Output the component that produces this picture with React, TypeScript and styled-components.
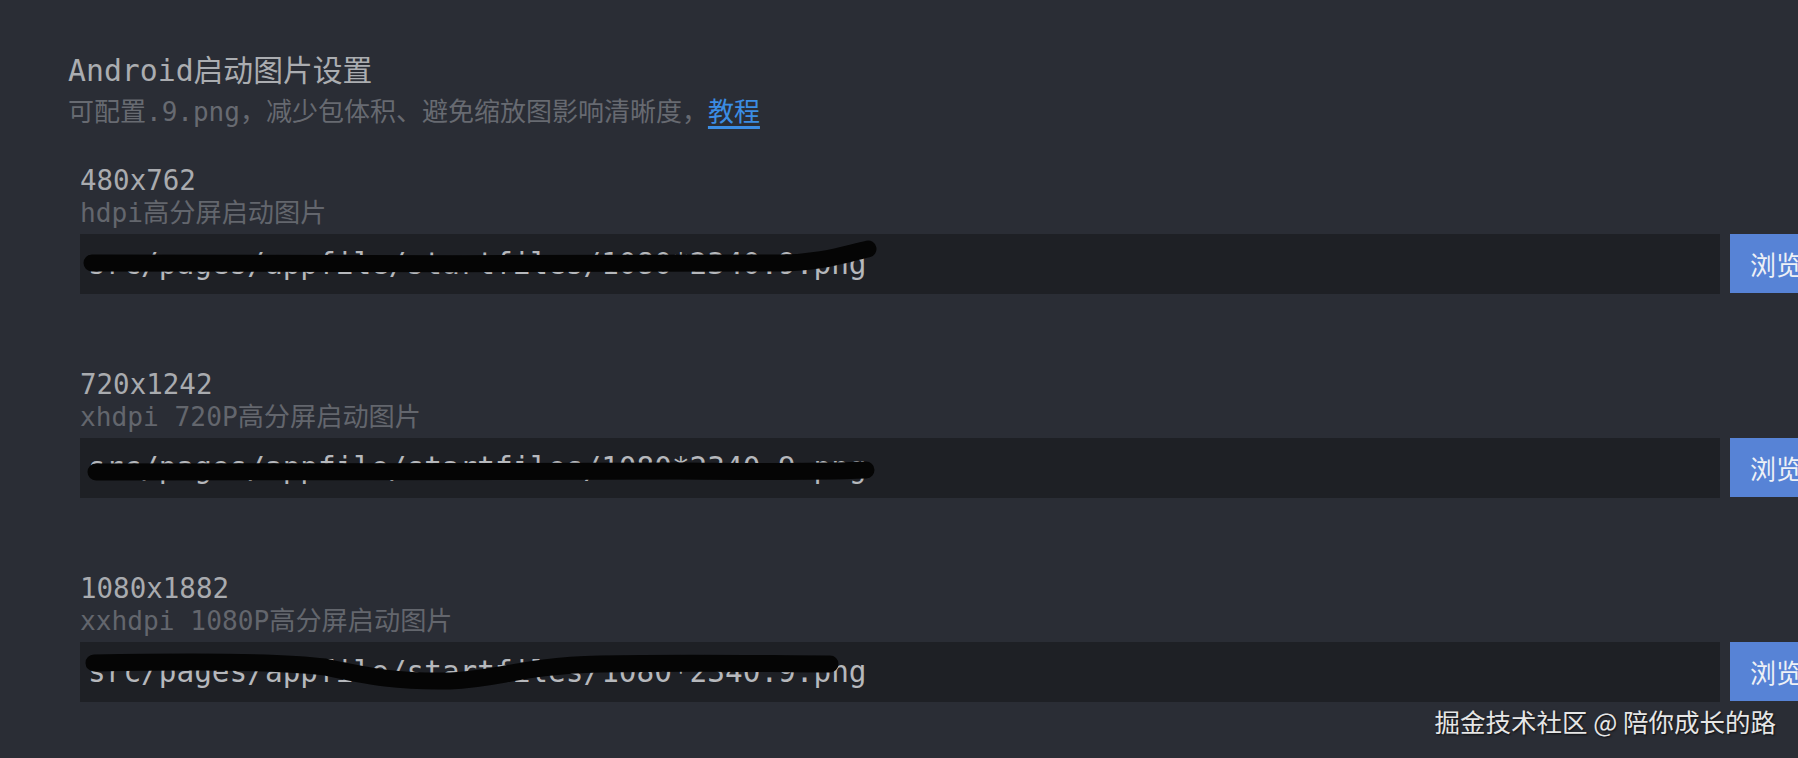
import styled, { createGlobalStyle } from 'styled-components';

const GlobalStyle = createGlobalStyle`
    html, body {
        margin: 0;
        padding: 0;
        background: #2a2d35;
        overflow: hidden;
    }
    #root {
        height: 758px;
    }
`

const mono = `"DejaVu Sans Mono", "Noto Sans CJK SC", monospace`;
const cjk = `"Noto Sans CJK SC", "Noto Sans", sans-serif`;

const Page = styled.div`
    position: relative;
    width: 1798px;
    height: 758px;
    box-sizing: border-box;
    padding-top: 52px;
    background: #2a2d35;
    font-family: ${mono};
`

const Header = styled.div`
    padding-left: 68px;
    display: flex;
    flex-direction: column;
`

const Title = styled.h1`
    margin: 0;
    font-size: 29.8px;
    font-weight: normal;
    line-height: 38px;
    color: #abadb1;
`

const Hint = styled.p`
    margin: 0;
    font-size: 26px;
    line-height: 40px;
    color: #676a71;
`

const Link = styled.a`
    font-family: ${cjk};
    color: #3b8de4;
    text-decoration: underline;
    text-decoration-thickness: 3px;
    text-underline-offset: 5px;
    cursor: pointer;
`

const List = styled.div`
    margin-top: 32px;
    padding-left: 80px;
    display: flex;
    flex-direction: column;
    gap: 74px;
`

const Item = styled.div`
    display: flex;
    flex-direction: column;
`

const Size = styled.div`
    font-size: 27.5px;
    line-height: 32px;
    color: #a9abaf;
`

const Desc = styled.div`
    font-size: 26.2px;
    line-height: 34px;
    color: #63666d;
`

const Field = styled.div`
    margin-top: 4px;
    display: flex;
    gap: 10px;
`

const PathBox = styled.div`
    position: relative;
    flex: 0 0 1640px;
    height: 60px;
    box-sizing: border-box;
    padding-left: 8px;
    display: flex;
    align-items: center;
    background: #1e2025;
    color: #b6b8bc;
    font-size: 29.4px;
    white-space: nowrap;
    overflow: hidden;
`

const Scribble = styled.svg`
    position: absolute;
    left: 0;
    top: 0;
    width: 1640px;
    height: 60px;
    pointer-events: none;
`

const Browse = styled.button`
    flex: 0 0 auto;
    height: 59px;
    padding: 0 20px;
    border: none;
    background: #5783d6;
    color: #eef1f6;
    font-family: ${cjk};
    font-size: 26px;
    white-space: nowrap;
`

const Watermark = styled.div`
    position: absolute;
    right: 22px;
    top: 704px;
    font-family: ${cjk};
    font-size: 25.5px;
    line-height: 34px;
    color: #e6e6e6;
    text-shadow: 1px 1px 2px rgba(0, 0, 0, 0.7);
    white-space: nowrap;
`

const items = [
    {
        size: '480x762',
        desc: 'hdpi高分屏启动图片',
        path: 'src/pages/appfile/startfiles/1080*2340.9.png',
        stroke: 'M12,29 C200,31 500,29 700,29 C740,29 765,20 788,15',
    },
    {
        size: '720x1242',
        desc: 'xhdpi 720P高分屏启动图片',
        path: 'src/pages/appfile/startfiles/1080*2340.9.png',
        stroke: 'M16,34 C200,35 450,32 600,33 C700,34 760,33 786,32',
    },
    {
        size: '1080x1882',
        desc: 'xxhdpi 1080P高分屏启动图片',
        path: 'src/pages/appfile/startfiles/1080*2340.9.png',
        stroke: 'M14,21 C120,19 200,19 245,25 C290,35 320,40 370,39 C420,37 440,24 520,22 C620,20 690,22 750,22',
    },
]

export default function App() {
    return (
        <Page>
            <GlobalStyle />
            <Header>
                <Title>Android启动图片设置</Title>
                <Hint>可配置.9.png，减少包体积、避免缩放图影响清晰度，<Link>教程</Link></Hint>
            </Header>
            <List>
                {items.map((it) => (
                    <Item key={it.size}>
                        <Size>{it.size}</Size>
                        <Desc>{it.desc}</Desc>
                        <Field>
                            <PathBox>
                                {it.path}
                                <Scribble viewBox="0 0 1640 60">
                                    <path d={it.stroke} fill="none" stroke="#050505" strokeWidth="17" strokeLinecap="round" strokeLinejoin="round" />
                                </Scribble>
                            </PathBox>
                            <Browse>浏览</Browse>
                        </Field>
                    </Item>
                ))}
            </List>
            <Watermark>掘金技术社区 @ 陪你成长的路</Watermark>
        </Page>
    )
}
